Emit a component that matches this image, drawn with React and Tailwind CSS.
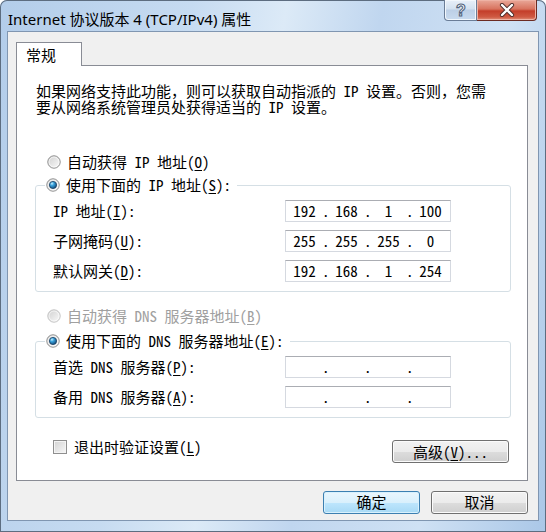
import React from "react";

// Windows 7 "Internet 协议版本 4 (TCP/IPv4) 属性" dialog

const song = "font-['Noto_Sans_Mono_CJK_SC','Noto_Sans_CJK_SC',sans-serif]";

const Key = ({ children }) => <span className="underline underline-offset-[2px]">{children}</span>;

const Radio = ({ checked, disabled }) => (
  <svg width="14" height="14" viewBox="0 0 14 14" className="shrink-0">
    <defs>
      <linearGradient id={checked ? "rOn" : "rOff"} x1="0" y1="0" x2="1" y2="1">
        <stop offset="0" stopColor={disabled ? "#d4d4d4" : "#cfcfcf"} />
        <stop offset="1" stopColor="#fbfbfb" />
      </linearGradient>
      <radialGradient id="rDot" cx="0.35" cy="0.3" r="0.8">
        <stop offset="0" stopColor="#c6f0ff" />
        <stop offset="0.35" stopColor="#3aa2dc" />
        <stop offset="1" stopColor="#0d3f6b" />
      </radialGradient>
    </defs>
    <circle cx="7" cy="7" r="6.2" fill={`url(#${checked ? "rOn" : "rOff"})`} stroke={disabled ? "#c2c2c2" : "#8a8a8a"} strokeWidth="1" />
    <circle cx="7" cy="7" r="5" fill="none" stroke="#ffffff" strokeWidth="0.8" opacity="0.8" />
    {checked && <circle cx="7" cy="7" r="3.6" fill="url(#rDot)" stroke="#183f63" strokeWidth="0.8" />}
  </svg>
);

const Checkbox = () => (
  <div className="h-[14px] w-[14px] shrink-0 border border-[#8f8f8f] bg-[linear-gradient(135deg,#d3d3d3,#f7f7f7)] shadow-[inset_0_0_0_1px_#f4f4f4]" />
);

const IpField = ({ parts }) => (
  <div className={`flex h-[22px] w-[166px] items-center border border-[#d5d9e0] border-t-[#abadb3] bg-white pl-px text-[15px] leading-[18px] ${song}`}>
    {parts.map((p, i) => (
      <React.Fragment key={i}>
        {i > 0 && <span className="w-[7px] text-center">.</span>}
        <span className="w-[35px] text-center">{p}</span>
      </React.Fragment>
    ))}
  </div>
);

const Row = ({ label, parts }) => (
  <div className="flex h-[22px] items-center">
    <span className="w-[232px] whitespace-pre">{label}</span>
    <IpField parts={parts} />
  </div>
);

const Group = ({ legend, children }) => (
  <fieldset className="ml-[18px] w-[476px] rounded-[3px] border border-[#d5dfe5]">
    <legend className="ml-[9px] flex h-[18px] items-center gap-[6px] pl-px pr-[6px] whitespace-pre">
      <Radio checked />
      <span>{legend}</span>
    </legend>
    <div className="flex flex-col gap-[8px] pl-[17px] pt-[6px] pb-[9px]">{children}</div>
  </fieldset>
);

const WinButton = ({ children, primary, className = "" }) => (
  <div
    className={`flex items-center justify-center rounded-[3px] border text-[15px] text-black ${
      primary
        ? "border-[#3c7fb1] bg-[linear-gradient(#eaf6fd,#d9f0fc_50%,#bee6fd_50%,#a7d9f5)] shadow-[inset_0_0_0_1px_#d8f1fd]"
        : "border-[#707070] bg-[linear-gradient(#f2f2f2,#ebebeb_50%,#dddddd_50%,#cfcfcf)] shadow-[inset_0_0_0_1px_#fbfbfb]"
    } ${className}`}
  >
    {children}
  </div>
);

export default function App() {
  return (
    <div className="relative h-[532px] w-[546px] overflow-hidden rounded-t-[7px] bg-[linear-gradient(100deg,#b3cdea_0%,#c6dbf1_30%,#dceaf7_45%,#c0d6ef_60%,#cfe1f4_80%,#aac7e7_100%)] shadow-[inset_0_0_0_1px_#5d6d80]">
      {/* title bar */}
      <div className="flex h-[32px] items-start">
        <div className="pl-[8px] pt-[10px] text-[15px] leading-[18px] text-black font-['Noto_Sans','Noto_Sans_CJK_SC',sans-serif]">
          Internet 协议版本 4 (TCP/IPv4) 属性
        </div>
        <div className="ml-auto mr-[9px] flex h-[21px]">
          <div className="flex w-[33px] items-center justify-center rounded-bl-[4px] border border-t-0 border-[#6a7d97] bg-[linear-gradient(#e8f0f9,#d3e1f0_45%,#bccfe6_50%,#c9dbef)] shadow-[inset_0_0_0_1px_#f2f7fc]">
            <svg width="14" height="16" viewBox="0 0 14 16">
              <text x="7" y="14" textAnchor="middle" fontSize="16" fontWeight="700" fontFamily="Liberation Sans, sans-serif" fill="#ffffff" stroke="#52647d" strokeWidth="1.1">?</text>
            </svg>
          </div>
          <div className="flex w-[60px] items-center justify-center rounded-br-[4px] border border-l-0 border-t-0 border-[#6b2b22] bg-[linear-gradient(#e9a899,#d8735e_45%,#c43e2a_55%,#cf5a43_85%,#e0927c)] shadow-[inset_0_0_0_1px_#eeb2a4]">
            <svg width="18" height="14" viewBox="0 0 18 14">
              <path d="M4 2 L14 12 M14 2 L4 12" stroke="#4a2a28" strokeWidth="4.2" strokeLinecap="round" />
              <path d="M4 2 L14 12 M14 2 L4 12" stroke="#ffffff" strokeWidth="2.4" strokeLinecap="round" />
            </svg>
          </div>
        </div>
      </div>

      {/* client area */}
      <div className="ml-[8px] flex h-[488px] w-[530px] flex-col bg-[#f0f0f0] pl-[8px] pt-[10px] shadow-[0_0_0_1px_#8096b1]">
        {/* tab */}
        <div className="relative z-10 -mb-px flex h-[24px] w-[66px] items-center border border-b-0 border-[#898c95] bg-white pl-[9px] text-[15px] leading-[18px] font-['Noto_Sans_CJK_SC',sans-serif]">
          常规
        </div>

        {/* tab panel */}
        <div className={`flex h-[416px] w-[512px] flex-col border border-[#898c95] bg-white text-[15px] leading-[18px] text-black ${song}`}>
          <p className="whitespace-pre pl-[19px] pt-[17px] leading-[16px]">
            如果网络支持此功能，则可以获取自动指派的 IP 设置。否则，您需
            <br />
            要从网络系统管理员处获得适当的 IP 设置。
          </p>

          <div className="ml-[30px] mt-[38px] flex h-[18px] items-center gap-[6px] whitespace-pre">
            <Radio />
            <span>自动获得 IP 地址(<Key>O</Key>)</span>
          </div>

          <div className="mt-[5px]">
            <Group legend={<>使用下面的 IP 地址(<Key>S</Key>):</>}>
              <Row label={<>IP 地址(<Key>I</Key>):</>} parts={["192", "168", "1", "100"]} />
              <Row label={<>子网掩码(<Key>U</Key>):</>} parts={["255", "255", "255", "0"]} />
              <Row label={<>默认网关(<Key>D</Key>):</>} parts={["192", "168", "1", "254"]} />
            </Group>
          </div>

          <div className="ml-[30px] mt-[15px] flex h-[18px] items-center gap-[6px] whitespace-pre text-[#a0a0a0]">
            <Radio disabled />
            <span>自动获得 DNS 服务器地址(<Key>B</Key>)</span>
          </div>

          <div className="mt-[7px]">
            <Group legend={<>使用下面的 DNS 服务器地址(<Key>E</Key>):</>}>
              <Row label={<>首选 DNS 服务器(<Key>P</Key>):</>} parts={["", "", "", ""]} />
              <Row label={<>备用 DNS 服务器(<Key>A</Key>):</>} parts={["", "", "", ""]} />
            </Group>
          </div>

          <div className="mt-[22px] flex items-start">
            <div className="-mt-[2px] ml-[36px] flex h-[18px] items-center gap-[7px] whitespace-pre">
              <Checkbox />
              <span>退出时验证设置(<Key>L</Key>)</span>
            </div>
            <WinButton className={`ml-auto mr-[18px] h-[23px] w-[117px] ${song}`}>
              <span className="whitespace-pre">高级(<Key>V</Key>)...</span>
            </WinButton>
          </div>
        </div>

        {/* dialog buttons */}
        <div className="mt-[10px] flex w-[512px] justify-end gap-[11px] font-['Noto_Sans_CJK_SC',sans-serif]">
          <WinButton primary className="h-[23px] w-[97px]">确定</WinButton>
          <WinButton className="h-[23px] w-[97px]">取消</WinButton>
        </div>
      </div>
    </div>
  );
}
